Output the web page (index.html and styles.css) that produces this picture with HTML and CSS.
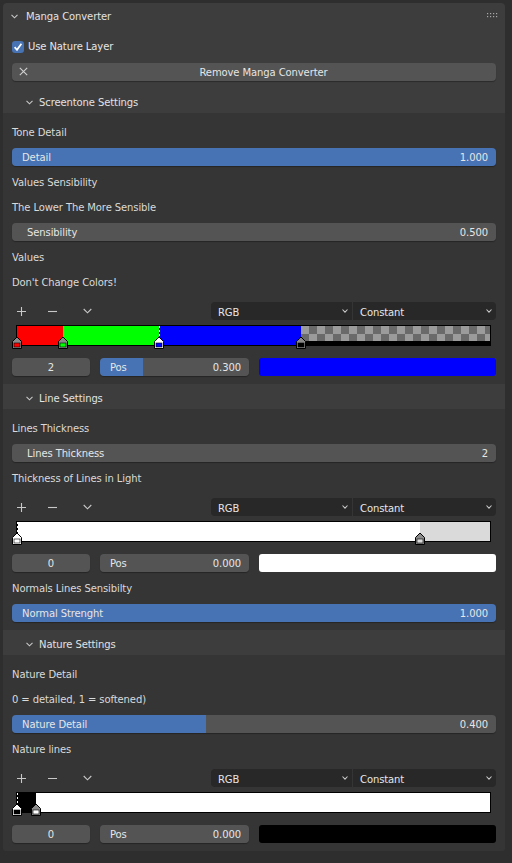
FILE: index.html
```html
<!DOCTYPE html>
<html>
<head>
<meta charset="utf-8">
<link rel="stylesheet" href="styles.css">
</head>
<body>
<div class="panel">
  <div class="panel-head">
    <svg class="chev" width="7" height="5" viewBox="0 0 7 5"><polyline points="0.5,0.8 3.5,3.8 6.5,0.8" /></svg>
    <span class="head-title">Manga Converter</span>
    <svg class="grip" width="11" height="5" viewBox="0 0 11 5"><g fill="#a8a8a8"><rect x="0" y="0" width="1.2" height="1.2"/><rect x="3" y="0" width="1.2" height="1.2"/><rect x="6" y="0" width="1.2" height="1.2"/><rect x="9" y="0" width="1.2" height="1.2"/><rect x="0" y="3" width="1.2" height="1.2"/><rect x="3" y="3" width="1.2" height="1.2"/><rect x="6" y="3" width="1.2" height="1.2"/><rect x="9" y="3" width="1.2" height="1.2"/></g></svg>
  </div>
  <div class="top">
    <div class="row">
      <span class="check"><svg width="12" height="12" viewBox="0 0 12 12"><polyline points="2.6,6.2 5,8.8 9.4,2.8" /></svg></span>
      <span class="check-label">Use Nature Layer</span>
    </div>
    <div class="row">
      <div class="btn">
        <span class="btn-icon"><svg width="9" height="9" viewBox="0 0 9 9"><path d="M0.8 0.8 L8.2 8.2 M8.2 0.8 L0.8 8.2" /></svg></span>
        <span class="btn-text">Remove Manga Converter</span>
      </div>
    </div>
  </div>

  <div class="sub-head"><svg class="chev" width="7" height="5" viewBox="0 0 7 5"><polyline points="0.5,0.8 3.5,3.8 6.5,0.8" /></svg><span>Screentone Settings</span></div>
  <div class="sub-body">
    <div class="row label">Tone Detail</div>
    <div class="row"><div class="slider blue-text" style="--v:100%"><span>Detail</span><span>1.000</span></div></div>
    <div class="row label">Values Sensibility</div>
    <div class="row label">The Lower The More Sensible</div>
    <div class="row"><div class="slider num" style="--v:0%"><span>Sensibility</span><span>0.500</span></div></div>
    <div class="row label">Values</div>
    <div class="row label">Don't Change Colors!</div>
    <div class="ramp-tools">
      <span class="tool t-plus"><svg width="9" height="9" viewBox="0 0 9 9"><path d="M4.5 0 V9 M0 4.5 H9" /></svg></span>
      <span class="tool t-minus"><svg width="9" height="9" viewBox="0 0 9 9"><path d="M0 4.5 H9" /></svg></span>
      <span class="tool t-more"><svg width="9" height="6" viewBox="0 0 9 6"><polyline points="0.7,1 4.5,4.8 8.3,1" /></svg></span>
      <span class="spacer"></span>
      <div class="drops">
        <div class="drop first"><span>RGB</span><svg width="6" height="4" viewBox="0 0 6 4"><polyline points="0.5,0.5 3,3.2 5.5,0.5" /></svg></div>
        <div class="drop second"><span>Constant</span><svg width="6" height="4" viewBox="0 0 6 4"><polyline points="0.5,0.5 3,3.2 5.5,0.5" /></svg></div>
      </div>
    </div>
    <div class="ramp">
      <div class="seg" style="width:9.8%;background:#ff0000"></div>
      <div class="seg" style="width:20.2%;background:#00ff00"></div>
      <div class="seg" style="width:30%;background:#0000ff"></div>
      <div class="seg checker" style="width:40%"></div>
      <div class="active-line" style="left:30%"></div>
      <svg class="stop" style="left:0%" width="10" height="13" viewBox="0 0 10 13"><path class="body" d="M0.5 12.5 V5.5 L5 1 L9.5 5.5 V12.5 Z"/><rect x="2" y="7" width="6" height="4" fill="#ff0000" stroke="#000" stroke-width="0.6"/></svg>
      <svg class="stop" style="left:9.8%" width="10" height="13" viewBox="0 0 10 13"><path class="body" d="M0.5 12.5 V5.5 L5 1 L9.5 5.5 V12.5 Z"/><rect x="2" y="7" width="6" height="4" fill="#00ff00" stroke="#000" stroke-width="0.6"/></svg>
      <svg class="stop active" style="left:30%" width="10" height="13" viewBox="0 0 10 13"><path class="body" d="M0.5 12.5 V5.5 L5 1 L9.5 5.5 V12.5 Z"/><rect x="2" y="7" width="6" height="4" fill="#0000ff" stroke="#000" stroke-width="0.6"/></svg>
      <svg class="stop" style="left:60%" width="10" height="13" viewBox="0 0 10 13"><path class="body" d="M0.5 12.5 V5.5 L5 1 L9.5 5.5 V12.5 Z"/><rect x="2" y="7" width="6" height="4" fill="#000000" stroke="#000" stroke-width="0.6"/></svg>
    </div>
    <div class="fields">
      <div class="field center">2</div>
      <div class="slider" style="--v:29%"><span>Pos</span><span>0.300</span></div>
      <div class="swatch" style="background:#0000ff"></div>
    </div>
  </div>

  <div class="sub-head"><svg class="chev" width="7" height="5" viewBox="0 0 7 5"><polyline points="0.5,0.8 3.5,3.8 6.5,0.8" /></svg><span>Line Settings</span></div>
  <div class="sub-body">
    <div class="row label">Lines Thickness</div>
    <div class="row"><div class="slider num" style="--v:0%"><span>Lines Thickness</span><span>2</span></div></div>
    <div class="row label">Thickness of Lines in Light</div>
    <div class="ramp-tools">
      <span class="tool t-plus"><svg width="9" height="9" viewBox="0 0 9 9"><path d="M4.5 0 V9 M0 4.5 H9" /></svg></span>
      <span class="tool t-minus"><svg width="9" height="9" viewBox="0 0 9 9"><path d="M0 4.5 H9" /></svg></span>
      <span class="tool t-more"><svg width="9" height="6" viewBox="0 0 9 6"><polyline points="0.7,1 4.5,4.8 8.3,1" /></svg></span>
      <span class="spacer"></span>
      <div class="drops">
        <div class="drop first"><span>RGB</span><svg width="6" height="4" viewBox="0 0 6 4"><polyline points="0.5,0.5 3,3.2 5.5,0.5" /></svg></div>
        <div class="drop second"><span>Constant</span><svg width="6" height="4" viewBox="0 0 6 4"><polyline points="0.5,0.5 3,3.2 5.5,0.5" /></svg></div>
      </div>
    </div>
    <div class="ramp">
      <div class="seg" style="width:85.2%;background:#ffffff"></div>
      <div class="seg" style="width:14.8%;background:#dadada"></div>
      <div class="active-line" style="left:0%"></div>
      <svg class="stop active" style="left:0%" width="10" height="13" viewBox="0 0 10 13"><path class="body" d="M0.5 12.5 V5.5 L5 1 L9.5 5.5 V12.5 Z"/><rect x="2" y="7" width="6" height="4" fill="#ffffff" stroke="#000" stroke-width="0.6"/></svg>
      <svg class="stop" style="left:85.2%" width="10" height="13" viewBox="0 0 10 13"><path class="body" d="M0.5 12.5 V5.5 L5 1 L9.5 5.5 V12.5 Z"/><rect x="2" y="7" width="6" height="4" fill="#dadada" stroke="#000" stroke-width="0.6"/></svg>
    </div>
    <div class="fields">
      <div class="field center">0</div>
      <div class="slider" style="--v:0%"><span>Pos</span><span>0.000</span></div>
      <div class="swatch" style="background:#ffffff"></div>
    </div>
    <div class="row label">Normals Lines Sensibilty</div>
    <div class="row"><div class="slider blue-text" style="--v:100%"><span>Normal Strenght</span><span>1.000</span></div></div>
  </div>

  <div class="sub-head"><svg class="chev" width="7" height="5" viewBox="0 0 7 5"><polyline points="0.5,0.8 3.5,3.8 6.5,0.8" /></svg><span>Nature Settings</span></div>
  <div class="sub-body">
    <div class="row label">Nature Detail</div>
    <div class="row label">0 = detailed, 1 = softened)</div>
    <div class="row"><div class="slider blue-text" style="--v:40%"><span>Nature Detail</span><span>0.400</span></div></div>
    <div class="row label">Nature lines</div>
    <div class="ramp-tools">
      <span class="tool t-plus"><svg width="9" height="9" viewBox="0 0 9 9"><path d="M4.5 0 V9 M0 4.5 H9" /></svg></span>
      <span class="tool t-minus"><svg width="9" height="9" viewBox="0 0 9 9"><path d="M0 4.5 H9" /></svg></span>
      <span class="tool t-more"><svg width="9" height="6" viewBox="0 0 9 6"><polyline points="0.7,1 4.5,4.8 8.3,1" /></svg></span>
      <span class="spacer"></span>
      <div class="drops">
        <div class="drop first"><span>RGB</span><svg width="6" height="4" viewBox="0 0 6 4"><polyline points="0.5,0.5 3,3.2 5.5,0.5" /></svg></div>
        <div class="drop second"><span>Constant</span><svg width="6" height="4" viewBox="0 0 6 4"><polyline points="0.5,0.5 3,3.2 5.5,0.5" /></svg></div>
      </div>
    </div>
    <div class="ramp">
      <div class="seg" style="width:4%;background:#000000"></div>
      <div class="seg" style="width:96%;background:#ffffff"></div>
      <div class="active-line" style="left:0%"></div>
      <svg class="stop active" style="left:0%" width="10" height="13" viewBox="0 0 10 13"><path class="body" d="M0.5 12.5 V5.5 L5 1 L9.5 5.5 V12.5 Z"/><rect x="2" y="7" width="6" height="4" fill="#000000" stroke="#000" stroke-width="0.6"/></svg>
      <svg class="stop" style="left:4%" width="10" height="13" viewBox="0 0 10 13"><path class="body" d="M0.5 12.5 V5.5 L5 1 L9.5 5.5 V12.5 Z"/><rect x="2" y="7" width="6" height="4" fill="#ffffff" stroke="#000" stroke-width="0.6"/></svg>
    </div>
    <div class="fields">
      <div class="field center">0</div>
      <div class="slider" style="--v:0%"><span>Pos</span><span>0.000</span></div>
      <div class="swatch" style="background:#000000"></div>
    </div>
  </div>
</div>
</body>
</html>
```

FILE: styles.css
```css
* { box-sizing: border-box; }
html, body { margin: 0; padding: 0; }
body {
  background: #2e2e2e;
  font-family: "DejaVu Sans", "Liberation Sans", sans-serif;
  font-size: 10px;
  letter-spacing: -0.1px;
  color: #dddddd;
  width: 512px;
  height: 863px;
  overflow: hidden;
}
.panel {
  margin: 3px 7px 0 3px;
  background: #3d3d3d;
  border-radius: 4px;
  overflow: hidden;
}
.chev polyline, .tool svg path, .tool svg polyline, .drop svg polyline {
  fill: none;
  stroke: #c8c8c8;
  stroke-width: 1.1;
}
.panel-head {
  height: 25px;
  display: flex;
  align-items: center;
  padding: 2px 7px 0 8px;
}
.panel-head .chev { margin-right: 8px; }
.head-title { flex: 1; color: #e2e2e2; }
.grip { margin-top: -3px; }
.top { padding: 6px 9px 4px; }
.row {
  height: 25px;
  display: flex;
  align-items: center;
}
.label { color: #dadada; padding-top: 2px; }
.check {
  width: 12px;
  height: 12px;
  border-radius: 3px;
  background: #4772b3;
  margin-right: 4px;
  display: flex;
}
.check polyline { fill: none; stroke: #ffffff; stroke-width: 1.7; }
.check-label { color: #e6e6e6; }
.btn {
  flex: 1;
  height: 18px;
  background: #545454;
  border-radius: 4px;
  box-shadow: 0 1px 1px rgba(0,0,0,0.3);
  display: flex;
  align-items: center;
  color: #e6e6e6;
}
.btn-icon { width: 19px; padding-left: 7px; display: flex; }
.btn-icon path { stroke: #d0d0d0; stroke-width: 1.1; fill: none; }
.btn-text { flex: 1; text-align: center; padding-top: 2px; }
.sub-head {
  height: 25px;
  background: #3d3d3d;
  display: flex;
  align-items: center;
  padding: 4px 0 0 23px;
  color: #e2e2e2;
}
.sub-head .chev { margin-right: 6px; margin-top: -1px; }
.sub-body {
  background: #353535;
  padding: 6px 9px 5px;
}
.slider {
  flex: 1;
  height: 18px;
  border-radius: 4px;
  background: linear-gradient(to right, #4772b3 var(--v), #545454 var(--v));
  box-shadow: 0 1px 1px rgba(0,0,0,0.3);
  display: flex;
  align-items: center;
  justify-content: space-between;
  padding: 2px 8px 0 10px;
  color: #e6e6e6;
}
.slider.num { padding-left: 15px; }
.ramp-tools {
  margin-top: 8px;
  height: 18px;
  display: flex;
  align-items: center;
}
.tool { width: 19px; height: 18px; display: flex; align-items: center; justify-content: center; }
.t-minus { margin-left: 12px; }
.t-more { margin-left: 16px; }
.spacer { flex: 1; }
.drops { width: 285px; height: 18px; display: flex; gap: 1px; }
.drop {
  height: 18px;
  background: #282828;
  display: flex;
  align-items: center;
  justify-content: space-between;
  padding: 2px 4px 0 7px;
  color: #e6e6e6;
}
.drop svg { margin-top: -2px; }
.drop.first { width: 141px; border-radius: 4px 0 0 4px; }
.drop.second { flex: 1; border-radius: 0 4px 4px 0; }
.ramp {
  position: relative;
  margin: 5px 5px 0 4px;
  height: 21px;
  border: 1px solid #000;
  display: flex;
  background: #000;
}
.seg { height: 100%; }
.checker {
  background:
    linear-gradient(#000, #000) bottom / 100% 4px no-repeat,
    conic-gradient(#6a6a6a 25%, #9b9b9b 0 50%, #6a6a6a 0 75%, #9b9b9b 0) 0 0 / 16px 16px;
}
.stop {
  position: absolute;
  top: 10px;
  transform: translateX(-50%);
}
.stop .body { fill: #8a8a8a; stroke: #000; stroke-width: 1; }
.stop.active .body { fill: #ffffff; }
.active-line {
  position: absolute;
  top: 0;
  width: 1px;
  height: 11px;
  background: repeating-linear-gradient(#ffffff 0 2px, #000000 2px 4px);
}
.fields {
  margin-top: 8px;
  height: 25px;
  display: grid;
  grid-template-columns: 78px 149px 1fr;
  column-gap: 10px;
  align-items: center;
}
.field {
  height: 18px;
  border-radius: 4px;
  background: #545454;
  box-shadow: 0 1px 1px rgba(0,0,0,0.3);
  display: flex;
  align-items: center;
  justify-content: center;
  padding-top: 2px;
  color: #e6e6e6;
}
.swatch {
  height: 18px;
  border-radius: 3px;
}
```
